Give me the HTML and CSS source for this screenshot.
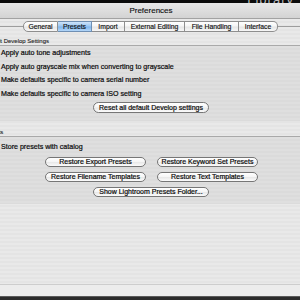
FILE: index.html
```html
<!DOCTYPE html>
<html>
<head>
<meta charset="utf-8">
<link rel="stylesheet" href="styles.css">
</head>
<body>
<div class="page">
  <div class="topstrip"><span class="lib">Library</span></div>
  <div class="titlebar">Preferences</div>
  <div class="win">
    <div class="tabs">
      <div class="tab t-general">General</div>
      <div class="tab t-presets sel">Presets</div>
      <div class="tab t-import">Import</div>
      <div class="tab t-ext">External Editing</div>
      <div class="tab t-file">File Handling</div>
      <div class="tab t-iface">Interface</div>
    </div>
    <div class="frame">
      <div class="glabel">Default Develop Settings</div>
      <div class="group g1">
        <div class="row">Apply auto tone adjustments</div>
        <div class="row">Apply auto grayscale mix when converting to grayscale</div>
        <div class="row">Make defaults specific to camera serial number</div>
        <div class="row">Make defaults specific to camera ISO setting</div>
        <div class="btnrow"><div class="btn wide tall">Reset all default Develop settings</div></div>
      </div>
      <div class="glabel gl2">Presets</div>
      <div class="group g2">
        <div class="row">Store presets with catalog</div>
        <div class="btnrow pair first">
          <div class="btn half">Restore Export Presets</div>
          <div class="btn half">Restore Keyword Set Presets</div>
        </div>
        <div class="btnrow pair">
          <div class="btn half">Restore Filename Templates</div>
          <div class="btn half">Restore Text Templates</div>
        </div>
        <div class="btnrow single">
          <div class="btn wide">Show Lightroom Presets Folder...</div>
        </div>
      </div>
    </div>
    <div class="footer"></div>
  </div>
  <div class="desk"></div>
</div>
</body>
</html>
```

FILE: styles.css
```css
html, body {
  margin: 0;
  padding: 0;
}
body {
  width: 300px;
  height: 300px;
  overflow: hidden;
  font-family: "Liberation Sans", Arial, sans-serif;
  color: #0a0a0a;
  background: #2b2b2b;
}
.page {
  width: 300px;
  height: 300px;
  display: flex;
  flex-direction: column;
  overflow: hidden;
}
.topstrip {
  height: 3px;
  flex: none;
  background: #0c0c0c;
  overflow: hidden;
  display: flex;
  justify-content: flex-end;
  align-items: flex-end;
  padding-right: 6px;
}
.lib {
  font-size: 13px;
  line-height: 13px;
  color: #b9b9b9;
  margin-bottom: -3px;
  letter-spacing: 1px;
}
.titlebar {
  height: 15px;
  flex: none;
  border-bottom: 1px solid #a2a2a2;
  background: linear-gradient(#e8e8e8, #d3d3d3);
  font-size: 8px;
  line-height: 15px;
  text-align: center;
  padding-left: 2px;
  color: #111;
  -webkit-text-stroke: 0.15px #111;
}
.win {
  flex: 1;
  display: flex;
  flex-direction: column;
  background: repeating-linear-gradient(#e9e9e9 0 2px, #e4e4e4 2px 4px);
}
.tabs {
  display: flex;
  padding-left: 23px;
  margin-top: 2px;
  height: 11px;
  position: relative;
  z-index: 1;
}
.tab {
  box-sizing: border-box;
  height: 11px;
  border: 1px solid #8e8e8e;
  border-left: none;
  background: linear-gradient(#ffffff, #f5f5f5 45%, #e6e6e6 55%, #f7f7f7);
  font-size: 6.8px;
  line-height: 9px;
  text-align: center;
  color: #111;
  -webkit-text-stroke: 0.15px #111;
}
.t-general { width: 35px; border-left: 1px solid #8e8e8e; border-radius: 5px 0 0 5px; }
.t-presets { width: 34px; }
.t-import { width: 33px; }
.t-ext { width: 60px; }
.t-file { width: 54px; }
.t-iface { width: 39px; border-radius: 0 5px 5px 0; }
.tab.sel {
  background: linear-gradient(#cfe4fa, #9cc8f3 45%, #7fb6ef 55%, #b3d6f8);
  border-color: #6f8fb3;
}
.frame {
  flex: 1;
  margin-top: -6px;
  border-top: 1px solid #9d9d9d;
  border-bottom: 1px solid #cdcdcd;
  padding-top: 10px;
  display: flex;
  flex-direction: column;
}
.glabel {
  height: 8px;
  font-size: 6px;
  line-height: 8px;
  margin-left: -17px;
  color: #222;
  -webkit-text-stroke: 0.1px #222;
}
.gl2 {
  margin-top: 7px;
}
.group {
  border-top: 1px solid #a9a9a9;
  background: repeating-linear-gradient(#dfdfdf 0 2px, #dbdbdb 2px 4px);
}
.g1 {
  padding: 1px 0 8px 0;
}
.g2 {
  padding: 4px 0 7px 0;
}
.row {
  height: 13.7px;
  line-height: 13.7px;
  font-size: 7.1px;
  padding-left: 1px;
  white-space: nowrap;
  -webkit-text-stroke: 0.2px #0a0a0a;
}
.btnrow {
  display: flex;
  justify-content: center;
  gap: 11px;
  padding-left: 2px;
}
.btnrow.pair {
  margin-top: 5px;
  padding-left: 3px;
}
.btnrow.pair.first {
  margin-top: 3px;
}
.btnrow.single {
  margin-top: 5px;
}
.btn {
  box-sizing: border-box;
  height: 10px;
  border: 1px solid #767676;
  border-radius: 6px;
  background: linear-gradient(#ffffff, #f6f6f6 45%, #e9e9e9 55%, #fbfbfb);
  font-size: 7px;
  line-height: 8px;
  text-align: center;
  white-space: nowrap;
  color: #0a0a0a;
  -webkit-text-stroke: 0.2px #0a0a0a;
}
.btn.tall {
  height: 11px;
  line-height: 9px;
}
.wide { width: 116px; }
.half { width: 101px; }
.footer {
  height: 11px;
  flex: none;
  background: #ececec;
}
.desk {
  height: 3px;
  flex: none;
  border-top: 1px solid #5a5a5a;
  background: #2b2b2b;
}
```
